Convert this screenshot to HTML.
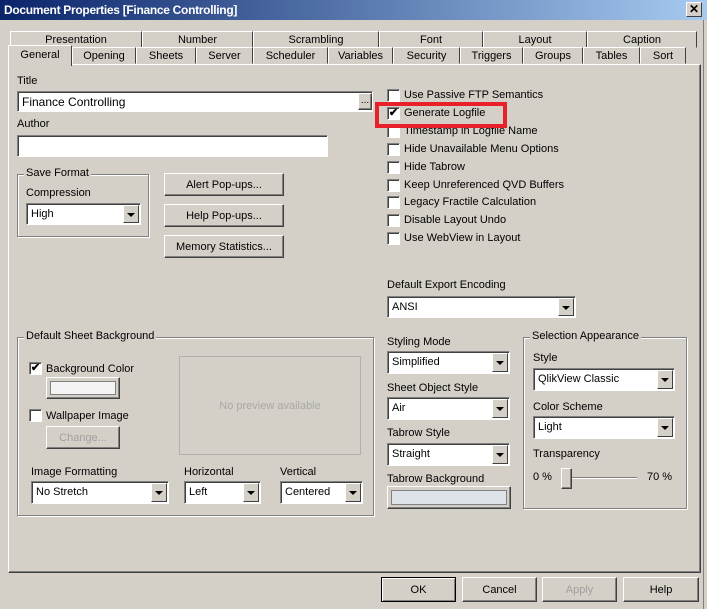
<!DOCTYPE html>
<html><head><meta charset="utf-8"><style>
*{box-sizing:border-box;margin:0;padding:0}
body{width:707px;height:609px;background:#d4d0c8;font-family:"Liberation Sans",sans-serif;font-size:11px;color:#000;position:relative;overflow:hidden}
.a{position:absolute;white-space:nowrap}
.title{left:0;top:0;width:707px;height:20px;background:linear-gradient(to right,#0a246a,#a6caf0);color:#fff;font-weight:bold;padding:3px 0 0 4px;font-size:12px;letter-spacing:-0.3px}
.xb{left:686px;top:2px;width:16px;height:15px;background:#d4d0c8;border:1px solid;border-color:#fff #404040 #404040 #fff;font-size:12px;text-align:center;line-height:12px;color:#000;font-weight:bold}
.tab{position:absolute;height:17px;border:1px solid;border-color:#fff #404040 transparent #fff;text-align:center;padding-top:2px;background:#d4d0c8}
.panel{left:8px;top:64px;width:693px;height:509px;border:1px solid;border-color:#fff #404040 #404040 #fff;box-shadow:inset -1px -1px 0 #808080}
.in{position:absolute;background:#fff;border:1px solid;border-color:#808080 #fff #fff #808080;box-shadow:inset 1px 1px 0 #404040;padding:3px 0 0 4px}
.sel{position:absolute;background:#fff;border:1px solid;border-color:#808080 #fff #fff #808080;box-shadow:inset 1px 1px 0 #404040;padding:4px 0 0 4px}
.sel i{position:absolute;right:1px;top:1px;bottom:1px;width:16px;background:#d4d0c8;border:1px solid;border-color:#fff #404040 #404040 #fff}
.sel i:after{content:"";position:absolute;left:3px;top:7px;border-left:4px solid transparent;border-right:4px solid transparent;border-top:4px solid #000}
.btn{position:absolute;background:#d4d0c8;border:1px solid;border-color:#fff #404040 #404040 #fff;box-shadow:inset -1px -1px 0 #808080;text-align:center;padding-top:5px}
.chk{position:absolute;width:13px;height:13px;background:#fff;border:1px solid;border-color:#808080 #fff #fff #808080;box-shadow:inset 1px 1px 0 #404040;font-size:11px;line-height:11px;text-align:center;font-weight:bold}
.grp{position:absolute;border:1px solid #808080;box-shadow:1px 1px 0 #fff,inset 1px 1px 0 #fff}
.gl{position:absolute;top:-8px;left:6px;background:#d4d0c8;padding:0 2px}
</style></head><body>
<div class="a title">Document Properties [Finance Controlling]</div>
<div class="a xb">✕</div>

<div class="tab" style="left:10px;top:31px;width:132px">Presentation</div>
<div class="tab" style="left:142px;top:31px;width:111px">Number</div>
<div class="tab" style="left:253px;top:31px;width:126px">Scrambling</div>
<div class="tab" style="left:379px;top:31px;width:104px">Font</div>
<div class="tab" style="left:483px;top:31px;width:104px">Layout</div>
<div class="tab" style="left:587px;top:31px;width:110px">Caption</div>

<div class="a panel"></div>
<div class="tab" style="left:72px;top:47px;width:64px">Opening</div>
<div class="tab" style="left:136px;top:47px;width:60px">Sheets</div>
<div class="tab" style="left:196px;top:47px;width:57px">Server</div>
<div class="tab" style="left:253px;top:47px;width:75px">Scheduler</div>
<div class="tab" style="left:328px;top:47px;width:65px">Variables</div>
<div class="tab" style="left:393px;top:47px;width:67px">Security</div>
<div class="tab" style="left:460px;top:47px;width:63px">Triggers</div>
<div class="tab" style="left:523px;top:47px;width:60px">Groups</div>
<div class="tab" style="left:583px;top:47px;width:57px">Tables</div>
<div class="tab" style="left:640px;top:47px;width:46px">Sort</div>
<div class="tab" style="left:8px;top:45px;width:64px;height:21px;border-bottom:none;padding-top:3px">General</div>

<div class="a" style="left:17px;top:75px">Title</div>
<div class="in" style="left:17px;top:91px;width:356px;height:21px;font-size:12px">Finance Controlling</div>
<div class="btn" style="left:358px;top:93px;width:14px;height:17px;padding-top:1px;font-size:10px">...</div>
<div class="a" style="left:17px;top:118px">Author</div>
<div class="in" style="left:17px;top:135px;width:311px;height:22px"></div>

<div class="grp" style="left:17px;top:174px;width:132px;height:63px"><span class="gl">Save Format</span></div>
<div class="a" style="left:26px;top:187px">Compression</div>
<div class="sel" style="left:26px;top:203px;width:115px;height:22px">High<i></i></div>
<div class="btn" style="left:164px;top:173px;width:120px;height:23px">Alert Pop-ups...</div>
<div class="btn" style="left:164px;top:204px;width:120px;height:23px">Help Pop-ups...</div>
<div class="btn" style="left:164px;top:235px;width:120px;height:23px">Memory Statistics...</div>

<div class="chk" style="left:387px;top:89px"></div><div class="a" style="left:404px;top:89px">Use Passive FTP Semantics</div>
<div class="chk" style="left:387px;top:107px">✔</div><div class="a" style="left:404px;top:107px">Generate Logfile</div>
<div class="chk" style="left:387px;top:125px"></div><div class="a" style="left:404px;top:125px">Timestamp in Logfile Name</div>
<div class="chk" style="left:387px;top:143px"></div><div class="a" style="left:404px;top:143px">Hide Unavailable Menu Options</div>
<div class="chk" style="left:387px;top:161px"></div><div class="a" style="left:404px;top:161px">Hide Tabrow</div>
<div class="chk" style="left:387px;top:179px"></div><div class="a" style="left:404px;top:179px">Keep Unreferenced QVD Buffers</div>
<div class="chk" style="left:387px;top:196px"></div><div class="a" style="left:404px;top:196px">Legacy Fractile Calculation</div>
<div class="chk" style="left:387px;top:214px"></div><div class="a" style="left:404px;top:214px">Disable Layout Undo</div>
<div class="chk" style="left:387px;top:232px"></div><div class="a" style="left:404px;top:232px">Use WebView in Layout</div>
<div class="a" style="left:375px;top:102px;width:132px;height:26px;border:4px solid #e8202a"></div>

<div class="a" style="left:387px;top:279px">Default Export Encoding</div>
<div class="sel" style="left:387px;top:296px;width:189px;height:22px">ANSI<i></i></div>

<div class="grp" style="left:17px;top:337px;width:357px;height:179px"><span class="gl">Default Sheet Background</span></div>
<div class="chk" style="left:29px;top:362px">✔</div><div class="a" style="left:46px;top:363px">Background Color</div>
<div class="btn" style="left:46px;top:377px;width:74px;height:22px;padding:3px"><div style="background:#f4f4f4;border:1px solid #808080;height:14px"></div></div>
<div class="chk" style="left:29px;top:409px"></div><div class="a" style="left:46px;top:410px">Wallpaper Image</div>
<div class="btn" style="left:46px;top:426px;width:74px;height:23px;color:#a0a0a0">Change...</div>
<div class="a" style="left:179px;top:356px;width:182px;height:99px;border:1px solid #b0b0b0;color:#a8a8a8;text-align:center;padding-top:43px">No preview available</div>
<div class="a" style="left:31px;top:466px">Image Formatting</div>
<div class="a" style="left:184px;top:466px">Horizontal</div>
<div class="a" style="left:280px;top:466px">Vertical</div>
<div class="sel" style="left:31px;top:481px;width:138px;height:23px">No Stretch<i></i></div>
<div class="sel" style="left:184px;top:481px;width:77px;height:23px">Left<i></i></div>
<div class="sel" style="left:280px;top:481px;width:83px;height:23px">Centered<i></i></div>

<div class="a" style="left:387px;top:336px">Styling Mode</div>
<div class="sel" style="left:387px;top:351px;width:123px;height:23px">Simplified<i></i></div>
<div class="a" style="left:387px;top:382px">Sheet Object Style</div>
<div class="sel" style="left:387px;top:397px;width:123px;height:23px">Air<i></i></div>
<div class="a" style="left:387px;top:427px">Tabrow Style</div>
<div class="sel" style="left:387px;top:443px;width:123px;height:23px">Straight<i></i></div>
<div class="a" style="left:387px;top:473px">Tabrow Background</div>
<div class="btn" style="left:387px;top:486px;width:124px;height:23px;padding:3px"><div style="background:#dde3e8;border:1px solid #808080;height:15px"></div></div>

<div class="grp" style="left:523px;top:337px;width:164px;height:172px"><span class="gl">Selection Appearance</span></div>
<div class="a" style="left:533px;top:352px">Style</div>
<div class="sel" style="left:533px;top:368px;width:142px;height:23px">QlikView Classic<i></i></div>
<div class="a" style="left:533px;top:401px">Color Scheme</div>
<div class="sel" style="left:533px;top:416px;width:142px;height:23px">Light<i></i></div>
<div class="a" style="left:533px;top:448px">Transparency</div>
<div class="a" style="left:533px;top:471px">0 %</div>
<div class="a" style="left:567px;top:477px;width:70px;height:2px;border-top:1px solid #808080;border-bottom:1px solid #fff"></div>
<div class="btn" style="left:561px;top:468px;width:11px;height:21px"></div>
<div class="a" style="left:647px;top:471px">70 %</div>

<div class="btn" style="left:381px;top:577px;width:75px;height:25px;border:1px solid #000;box-shadow:inset 1px 1px 0 #fff,inset -1px -1px 0 #808080;padding-top:6px">OK</div>
<div class="btn" style="left:462px;top:577px;width:75px;height:25px;padding-top:6px">Cancel</div>
<div class="btn" style="left:542px;top:577px;width:75px;height:25px;padding-top:6px;color:#a0a0a0">Apply</div>
<div class="btn" style="left:623px;top:577px;width:76px;height:25px;padding-top:6px">Help</div>
<div class="a" style="left:703px;top:20px;width:4px;height:589px;border-left:1px solid #808080;background:#d4d0c8"></div>
</body></html>
